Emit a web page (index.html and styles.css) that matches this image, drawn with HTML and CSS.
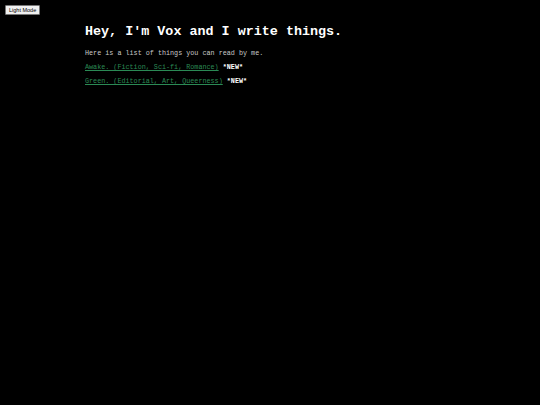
FILE: index.html
```html
<!DOCTYPE html>
<html>
<head>
<meta charset="utf-8">
<link rel="stylesheet" href="styles.css">
</head>
<body>
<button class="mode">Light Mode</button>
<main class="content">
<h1 class="title">Hey, I'm Vox and I write things.</h1>
<p class="intro">Here is a list of things you can read by me.</p>
<p class="item"><a href="#">Awake. (Fiction, Sci-fi, Romance)</a> <b>*NEW*</b></p>
<p class="item"><a href="#">Green. (Editorial, Art, Queerness)</a> <b>*NEW*</b></p>
</main>
</body>
</html>
```
FILE: styles.css
```css
html, body {
  margin: 0;
  background: #000;
  height: 100%;
}
body {
  font-family: "Liberation Mono", "Courier New", monospace;
  color: #c8c8c8;
}
.mode {
  display: block;
  margin: 5px 0 0 5px;
  padding: 1px 3px;
  font-family: "Liberation Sans", Arial, sans-serif;
  font-size: 5.5px;
  background: #efefef;
  color: #000;
  border: 1px solid #767676;
  border-radius: 1px;
  height: 10px;
  line-height: 6px;
}
.content {
  padding-left: 85px;
}
.title {
  margin: 9px 0 0;
  font-size: 13.4px;
  line-height: 16px;
  font-weight: bold;
  color: #fff;
}
.intro {
  margin: 9px 0 0;
  font-size: 6.75px;
  line-height: 8px;
}
.item {
  margin: 6px 0 0;
  font-size: 6.75px;
  line-height: 8px;
}
.item a {
  color: #2b8a55;
}
.item b {
  color: #fff;
}
```
